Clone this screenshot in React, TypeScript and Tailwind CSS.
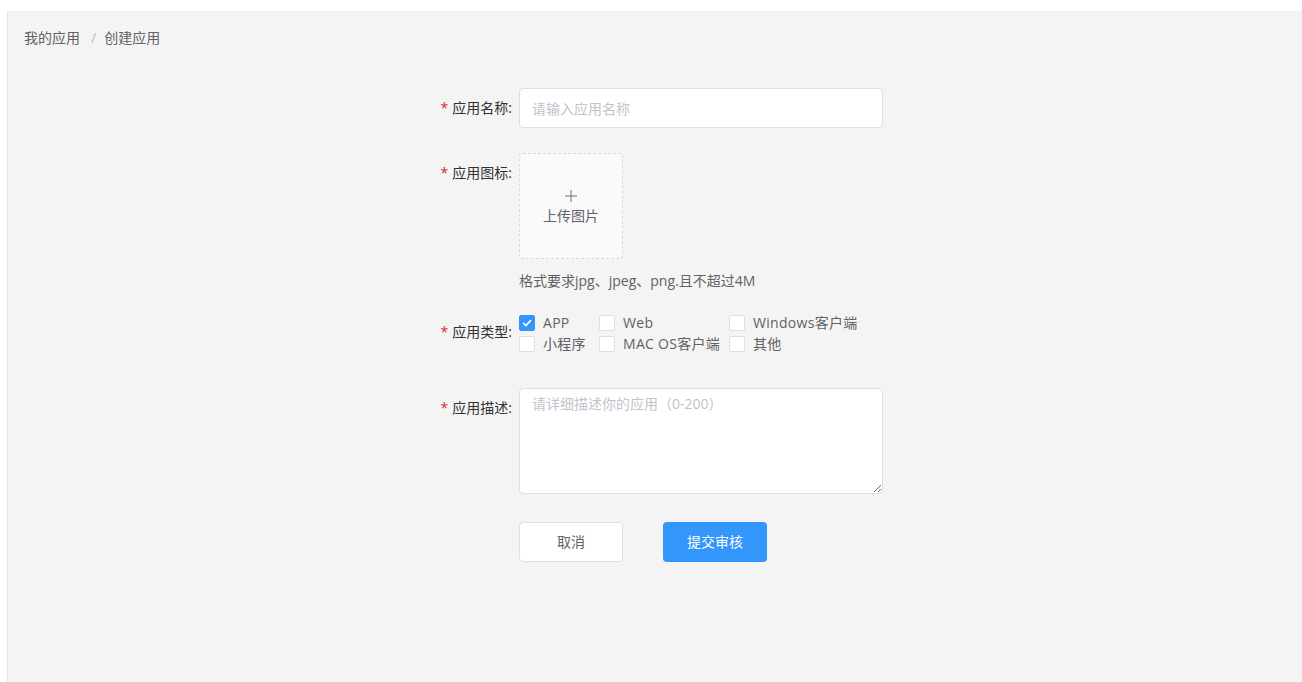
import { useState } from 'react'

const types = [
  { key: 'app', label: 'APP' },
  { key: 'web', label: 'Web' },
  { key: 'win', label: 'Windows客户端' },
  { key: 'mini', label: '小程序' },
  { key: 'mac', label: 'MAC OS客户端' },
  { key: 'other', label: '其他' },
]

function Label({ text }: { text: string }) {
  return (
    <div className="h-10 w-[107px] shrink-0 pr-[7px] text-right text-sm leading-10 text-[#303133]">
      <span className="mr-[4px] text-[#e0282e]">*</span>
      {text}:
    </div>
  )
}

function Checkbox({ label, checked, onChange }: { label: string; checked: boolean; onChange: () => void }) {
  return (
    <label className="flex h-[21px] cursor-pointer items-center text-sm text-[#606266]">
      <span
        className={
          checked
            ? 'flex size-4 items-center justify-center rounded-[2px] border border-[#3396fb] bg-[#3396fb]'
            : 'flex size-4 items-center justify-center rounded-[2px] border border-[#dcdfe6] bg-white'
        }
        onClick={onChange}
      >
        {checked && (
          <svg viewBox="0 0 12 12" className="size-3" fill="none" stroke="white" strokeWidth="1.6">
            <path d="M2.5 6.2l2.4 2.4 4.6-5" strokeLinecap="round" strokeLinejoin="round" />
          </svg>
        )}
      </span>
      <span className="ml-2 tracking-[0.3px]">{label}</span>
    </label>
  )
}

export default function App() {
  const [checked, setChecked] = useState<Record<string, boolean>>({ app: true })

  return (
    <div
      className="flex h-[682px] flex-col overflow-hidden bg-white"
      style={{ fontFamily: '"Open Sans", "Noto Sans CJK SC", sans-serif' }}
    >
      <div className="h-[11px] shrink-0" />
      <div className="flex flex-1">
        <div className="w-[8px] shrink-0 border-r border-[#e4e4e4] bg-white" />
        <div className="flex-1 bg-[#f4f4f4]">
          <div className="flex px-[16px] pt-[17px] text-sm leading-5 text-[#606266]">
            <span>我的应用</span>
            <span className="ml-[11px] mr-[8px] text-[#b4b8bf]">/</span>
            <span>创建应用</span>
          </div>

          <div className="ml-[404px] mt-10 flex flex-col">
            <div className="flex">
              <Label text="应用名称" />
              <input
                className="h-10 w-[364px] rounded-[4px] border border-[#dcdfe6] bg-white px-3 text-sm text-[#606266] outline-none placeholder:text-[#c0c4cc]"
                placeholder="请输入应用名称"
              />
            </div>

            <div className="mt-[25px] flex">
              <Label text="应用图标" />
              <div className="flex flex-col">
                <div className="flex h-[106px] w-[104px] cursor-pointer flex-col items-center justify-center rounded-[4px] border border-dashed border-[#d9d9d9] bg-[#fafafa] pt-[4px] text-[#606266]">
                  <svg viewBox="0 0 12 12" className="mt-[2px] size-3" stroke="#737373" strokeWidth="1">
                    <path d="M6 0v12M0 6h12" />
                  </svg>
                  <span className="mt-[2px] text-sm leading-6">上传图片</span>
                </div>
                <div className="mt-3 text-sm leading-5 text-[#606266]">格式要求jpg、jpeg、png.且不超过4M</div>
              </div>
            </div>

            <div className="mt-[21px] flex">
              <Label text="应用类型" />
              <div className="grid grid-cols-[80px_130px_auto]">
                {types.map((t) => (
                  <Checkbox
                    key={t.key}
                    label={t.label}
                    checked={!!checked[t.key]}
                    onChange={() => setChecked((c) => ({ ...c, [t.key]: !c[t.key] }))}
                  />
                ))}
              </div>
            </div>

            <div className="mt-[34px] flex">
              <Label text="应用描述" />
              <textarea
                className="h-[106px] w-[364px] rounded-[4px] border border-[#dcdfe6] bg-white px-3 py-[3px] text-sm leading-6 text-[#606266] outline-none placeholder:text-[#c0c4cc]"
                placeholder="请详细描述你的应用（0-200）"
              />
            </div>

            <div className="ml-[107px] mt-[28px] flex gap-10">
              <button className="h-10 w-[104px] rounded-[4px] border border-[#dcdfe6] bg-white text-sm text-[#606266]">
                取消
              </button>
              <button className="h-10 w-[104px] rounded-[4px] bg-[#3396fb] text-sm text-white">提交审核</button>
            </div>
          </div>
        </div>
      </div>
    </div>
  )
}
